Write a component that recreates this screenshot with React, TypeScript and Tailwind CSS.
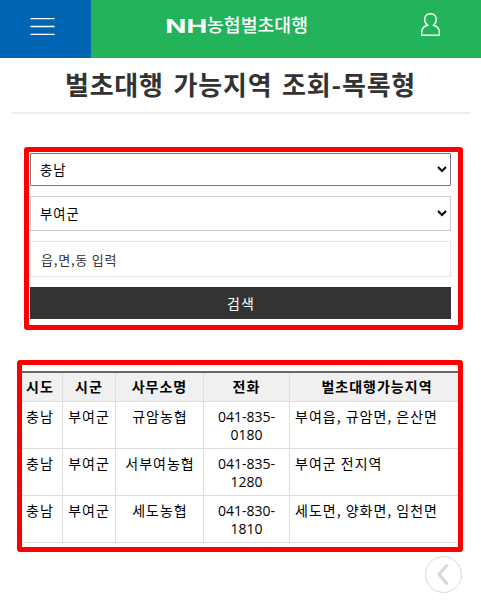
const rows = [
  ["충남", "부여군", "규암농협", "041-835-", "0180", "부여읍, 규암면, 은산면"],
  ["충남", "부여군", "서부여농협", "041-835-", "1280", "부여군 전지역"],
  ["충남", "부여군", "세도농협", "041-830-", "1810", "세도면, 양화면, 임천면"],
];

function Header() {
  return (
    <header className="flex h-[58px] bg-[#22b35b]">
      <button className="flex h-[58px] w-[91px] items-start pt-[18px] pl-[30px] bg-[#0066b3]" aria-label="메뉴">
        <svg width="25" height="18" viewBox="0 0 25 18" stroke="#fff" strokeWidth="1.4">
          <path d="M0.5 0.6H24.5M0.5 8.5H24.5M0.5 16.4H24.5" />
        </svg>
      </button>
      <svg className="ml-[73px] mt-[12px]" width="146" height="28" viewBox="0 0 146 28" fill="#fff">
        <text x="1.2" y="20.8" fontFamily="Inter, sans-serif" fontWeight="700" fontSize="19" textLength="42" lengthAdjust="spacingAndGlyphs">NH</text>
        <text x="43" y="19.8" fontFamily="'Noto Sans CJK KR', sans-serif" fontWeight="500" fontSize="18" textLength="101" lengthAdjust="spacingAndGlyphs">농협벌초대행</text>
      </svg>
      <svg className="ml-[110px] mt-[12px]" width="22" height="26" viewBox="0 0 22 26" fill="none" stroke="#fff" strokeWidth="1.4">
        <path d="M7.5 13.2C5.6 11.8 4.7 9.8 4.7 7.5C4.7 4 7.1 1.7 10.5 1.7S16.3 4 16.3 7.5C16.3 9.8 15.4 11.8 13.5 13.2C17.5 14.2 19.3 16.8 19.3 20V23.3H1.7V20C1.7 16.8 3.5 14.2 7.5 13.2Z" />
      </svg>
    </header>
  );
}

export default function App() {
  return (
    <div className="h-[608px] w-[481px] overflow-hidden bg-white font-['Noto_Sans_CJK_KR',sans-serif] text-black">
      <Header />
      <h1 className="mx-[11px] h-[56px] border-b-2 border-[#eee] text-center text-[26px] leading-[51px] font-bold tracking-[0.8px] whitespace-nowrap text-[#333] [word-spacing:3px]">
        벌초대행 가능지역 조회-목록형
      </h1>

      <section className="mt-[33px] ml-[24px] flex h-[183px] w-[439px] flex-col gap-[10px] rounded-[3px] border-5 border-[#f00] pt-px pr-[7px] pl-px text-[13.33px] tracking-[1px]">
        <select className="h-[33px] w-full shrink-0 rounded-[1px] border border-[#767676] bg-white pl-[5px]">
          <option>충남</option>
        </select>
        <select className="h-[35px] w-full shrink-0 border border-[#ccc] bg-white pl-[5px]">
          <option>부여군</option>
        </select>
        <input
          className="h-[36px] w-full shrink-0 border border-[#e5e5e5] bg-white pl-[10px] text-[13px] tracking-[0.8px] placeholder:text-[#333]"
          placeholder="읍,면,동 입력"
        />
        <button className="h-[32px] w-full shrink-0 bg-[#333] pl-px text-[14px] leading-[31px] text-white">검색</button>
      </section>

      <section className="mt-[30px] ml-[17px] h-[192px] w-[446px] rounded-[3px] border-5 border-[#f00] pt-[6px]">
        <div className="border-t-2 border-[#666] text-[14px] leading-[18px] tracking-[1px]">
          <div className="grid h-[29px] grid-cols-[41px_53px_88px_86px_168px] border-b border-[#ddd] bg-[#f0f0f0] text-center leading-[27px] font-bold *:border-r *:border-[#ddd]">
            <div className="pr-1">시도</div>
            <div>시군</div>
            <div>사무소명</div>
            <div>전화</div>
            <div className="border-r-0! pl-[6px]">벌초대행가능지역</div>
          </div>
          {rows.map((r) => (
            <div
              key={r[4]}
              className="grid h-[47px] grid-cols-[41px_53px_88px_86px_168px] border-b border-[#ddd] text-center *:border-r *:border-[#ddd] *:pt-[5px]"
            >
              <div className="pr-1">{r[0]}</div>
              <div>{r[1]}</div>
              <div className="pl-px">{r[2]}</div>
              <div className="pt-[6px]! font-['Open_Sans',sans-serif] tracking-normal">
                {r[3]}
                <br />
                {r[4]}
              </div>
              <div className="border-r-0! pl-[5px] text-left">{r[5]}</div>
            </div>
          ))}
        </div>
      </section>

      <button className="mt-[4px] ml-[425px] block h-[37px] w-[37px]" aria-label="이전">
        <svg width="37" height="37" viewBox="0 0 37 37" fill="none" stroke="#d8d8d8">
          <circle cx="18.5" cy="18.5" r="18" />
          <path d="M22.5 8.5L14 18.5L22.5 28.5" strokeWidth="3" />
        </svg>
      </button>
    </div>
  );
}
